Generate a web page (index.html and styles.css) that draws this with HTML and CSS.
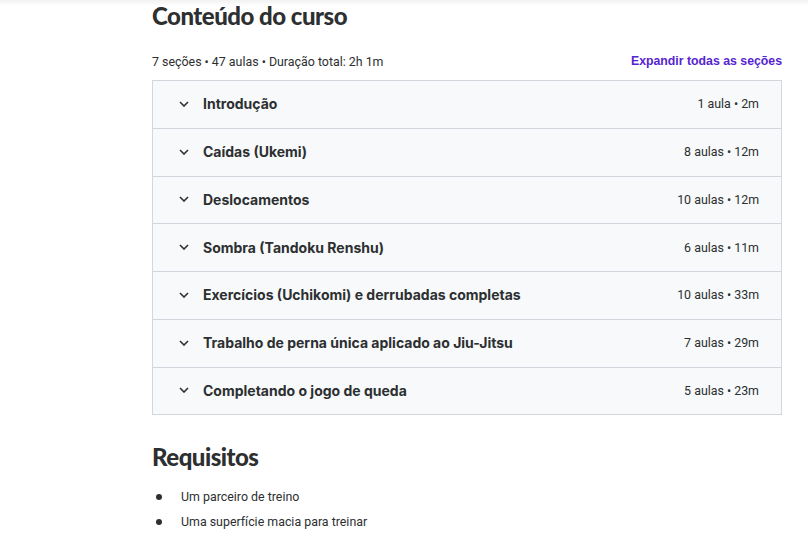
FILE: index.html
```html
<!DOCTYPE html>
<html lang="pt-BR">
<head>
<meta charset="utf-8">
<link rel="stylesheet" href="styles.css">
</head>
<body>
<div class="topshade"></div>
<main class="page">
  <section class="content">
    <h2 class="title">Conteúdo do curso</h2>
    <div class="meta">
      <span class="meta-text">7 seções • 47 aulas • Duração total: 2h 1m</span>
      <button class="expand">Expandir todas as seções</button>
    </div>
    <div class="sections">
      <div class="row"><span class="chev"><svg width="10" height="6" viewBox="0 0 10 6"><path d="M1 1l4 4 4-4" fill="none" stroke="#2d2f31" stroke-width="1.6"/></svg></span><span class="name">Introdução</span><span class="info">1 aula • 2m</span></div>
      <div class="row"><span class="chev"><svg width="10" height="6" viewBox="0 0 10 6"><path d="M1 1l4 4 4-4" fill="none" stroke="#2d2f31" stroke-width="1.6"/></svg></span><span class="name">Caídas (Ukemi)</span><span class="info">8 aulas • 12m</span></div>
      <div class="row"><span class="chev"><svg width="10" height="6" viewBox="0 0 10 6"><path d="M1 1l4 4 4-4" fill="none" stroke="#2d2f31" stroke-width="1.6"/></svg></span><span class="name">Deslocamentos</span><span class="info">10 aulas • 12m</span></div>
      <div class="row"><span class="chev"><svg width="10" height="6" viewBox="0 0 10 6"><path d="M1 1l4 4 4-4" fill="none" stroke="#2d2f31" stroke-width="1.6"/></svg></span><span class="name">Sombra (Tandoku Renshu)</span><span class="info">6 aulas • 11m</span></div>
      <div class="row"><span class="chev"><svg width="10" height="6" viewBox="0 0 10 6"><path d="M1 1l4 4 4-4" fill="none" stroke="#2d2f31" stroke-width="1.6"/></svg></span><span class="name">Exercícios (Uchikomi) e derrubadas completas</span><span class="info">10 aulas • 33m</span></div>
      <div class="row"><span class="chev"><svg width="10" height="6" viewBox="0 0 10 6"><path d="M1 1l4 4 4-4" fill="none" stroke="#2d2f31" stroke-width="1.6"/></svg></span><span class="name">Trabalho de perna única aplicado ao Jiu-Jitsu</span><span class="info">7 aulas • 29m</span></div>
      <div class="row"><span class="chev"><svg width="10" height="6" viewBox="0 0 10 6"><path d="M1 1l4 4 4-4" fill="none" stroke="#2d2f31" stroke-width="1.6"/></svg></span><span class="name">Completando o jogo de queda</span><span class="info">5 aulas • 23m</span></div>
    </div>
  </section>
  <section class="reqs">
    <h2 class="title">Requisitos</h2>
    <ul class="req-list">
      <li>Um parceiro de treino</li>
      <li>Uma superfície macia para treinar</li>
    </ul>
  </section>
</main>
</body>
</html>
```
FILE: styles.css
```css
html, body {
  margin: 0;
  padding: 0;
  background: #ffffff;
  color: #2d2f31;
  font-family: Roboto, "Liberation Sans", Arial, sans-serif;
}
.topshade {
  position: fixed;
  top: 0;
  left: 0;
  right: 0;
  height: 6px;
  background: linear-gradient(to bottom, rgba(0,0,0,0.05), rgba(0,0,0,0));
  pointer-events: none;
}
.page {
  width: 630px;
  padding-left: 152px;
  padding-top: 1px;
}
.title {
  margin: 0;
  font-family: Lato, "Noto Sans", sans-serif;
  font-weight: 900;
  font-size: 24px;
  line-height: 29px;
  letter-spacing: -0.5px;
  color: #2d2f31;
}
.meta {
  display: flex;
  justify-content: space-between;
  align-items: center;
  margin-top: 21px;
  height: 20px;
  margin-bottom: 9px;
}
.meta-text {
  font-size: 12.4px;
  color: #2d2f31;
}
.expand {
  border: 0;
  background: none;
  padding: 0;
  font-family: "Liberation Sans", Arial, sans-serif;
  font-weight: 700;
  font-size: 12.3px;
  color: #5624d0;
}
.sections {
  border: 1px solid #d1d7dc;
  border-bottom: 0;
}
.row {
  display: flex;
  align-items: center;
  height: 46.75px;
  padding-bottom: 1px;
  box-sizing: content-box;
  border-bottom: 1px solid #d1d7dc;
  background: #f7f9fa;
  padding-left: 26px;
  padding-right: 22px;
}
.row {
  height: 45.75px;
}
.chev {
  display: flex;
  width: 24px;
}
.name {
  flex: 1;
  font-family: Inter, "Noto Sans", sans-serif;
  font-weight: 700;
  font-size: 14px;
  color: #2d2f31;
}
.info {
  font-size: 12.4px;
  color: #2d2f31;
}
.reqs {
  margin-top: 27px;
}
.req-list {
  list-style: none;
  margin: 13px 0 0;
  padding: 0 0 0 29px;
  font-size: 12.4px;
  line-height: 25px;
}
.req-list li {
  position: relative;
}
.req-list li::before {
  content: "";
  position: absolute;
  left: -25px;
  top: 10px;
  width: 6px;
  height: 6px;
  border-radius: 50%;
  background: #2d2f31;
}
```
